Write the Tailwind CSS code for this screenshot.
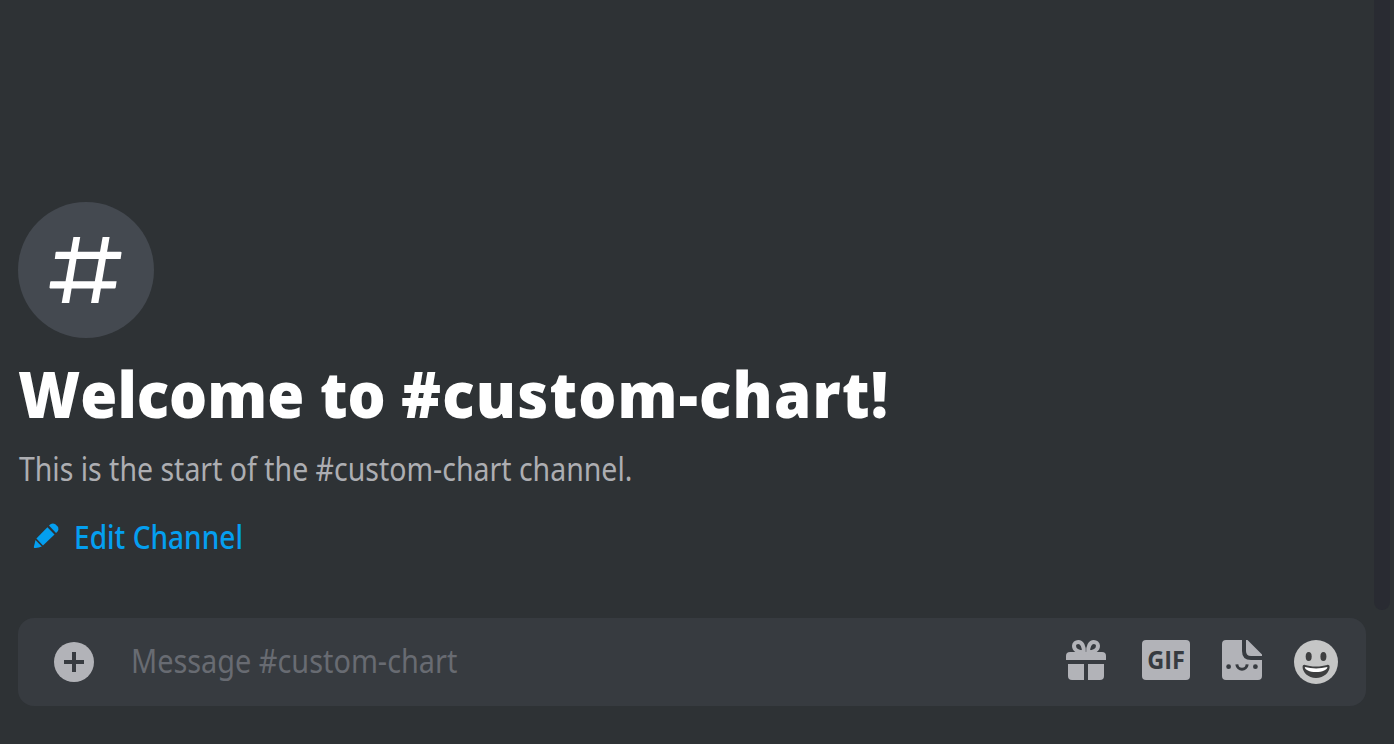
<!DOCTYPE html>
<html lang="en">
<head>
<meta charset="utf-8">
<title>#custom-chart</title>
<script src="https://cdn.jsdelivr.net/npm/@tailwindcss/browser@4"></script>
</head>
<body class="h-[744px] w-[1394px] overflow-hidden bg-[#2e3235] font-['Noto_Sans','Open_Sans',sans-serif]">
<div class="flex h-full flex-col">
  <div class="flex h-[610px] justify-between">
    <main class="flex flex-col items-start pl-[18px] pt-[202px]">
      <div class="size-[136px] rounded-full bg-[#444950]">
        <svg class="size-full" viewBox="18 202 136 136" fill="#fff">
          <path d="M73.4 237H80.2L69.2 303H61.7Z"/>
          <path d="M102.6 237H109.6L98.4 303H91Z"/>
          <path d="M56.4 251.7H120.5Q121.8 251.7 121.5 253L120.6 259H54.8L55.6 252.6Q55.7 251.7 56.4 251.7Z"/>
          <path d="M51 281.2H116.6L115.7 287.4Q115.5 288.4 114.6 288.4H50.3Q49.3 288.4 49.5 287.3L50.2 282Q50.3 281.2 51 281.2Z"/>
        </svg>
      </div>
      <h1 class="mt-[20px] h-[72px] origin-left scale-x-[0.937] whitespace-nowrap font-['Open_Sans'] text-[64px] font-extrabold leading-[72px] text-white">Welcome to <span class="tracking-[1.3px]">#custom-chart!</span></h1>
      <p class="mt-[17px] h-[44px] origin-left scale-x-[0.89] whitespace-nowrap pl-px text-[32px] leading-[44px] text-[#adaeb2]">This is the start of the #custom-chart channel.</p>
      <button class="mt-[24px] flex h-[44px] items-center pl-[15px] text-[#049ff0]">
        <svg class="-mt-0.5 h-[26px] w-[26px]" viewBox="0 0 26 26" fill="currentColor">
          <path d="M16 2.6Q18.8-.8 22.4 1.2Q26.2 4 25.2 7.2Q24.7 8.6 23 10Z"/>
          <path d="M14.4 4.2L21.5 11.5L10 22.4L3.4 15.6Z"/>
          <path d="M2.5 17L8.8 23.6Q5 25.3 1.3 24.9Q.7 24.7 .9 23.8Z"/>
        </svg>
        <span class="ml-[15px] origin-left scale-x-[0.877] whitespace-nowrap text-[32px] font-medium leading-[44px]">Edit Channel</span>
      </button>
    </main>
    <div class="mr-1 h-full w-4 rounded-b-lg bg-[#292b32]"></div>
  </div>
  <form class="ml-[18px] mt-2 flex h-[88px] w-[1348px] items-center rounded-2xl bg-[#373b40] pl-9 pr-7">
    <svg class="size-10 shrink-0" viewBox="0 0 40 40"><circle cx="20" cy="20" r="20" fill="#b2b3b8"/><path d="M18 10h4v8h8v4h-8v8h-4v-8h-8v-4h8z" fill="#373b40"/></svg>
    <span class="-mt-0.5 ml-[37px] origin-left scale-x-[0.902] whitespace-nowrap text-[32px] leading-[44px] text-[#686b72]">Message #custom-chart</span>
    <div class="ml-auto flex items-center">
      <svg class="-mt-1 h-10 w-10" viewBox="0 0 40 40" fill="#b2b3b8">
        <path d="M4 12H36Q40 12 40 16V20H0V16Q0 12 4 12Z"/>
        <path d="M2 24H18V40H6Q2 40 2 36Z"/>
        <path d="M22 24H38V36Q38 40 34 40H22Z"/>
        <path d="M17.8 12.2C12 12.2 8 10 8 5.8C8 3.5 10 2 12.2 2C16 2 18.2 6.5 17.8 12.2Z" fill="none" stroke="#b2b3b8" stroke-width="4"/>
        <path d="M22.2 12.2C28 12.2 32 10 32 5.8C32 3.5 30 2 27.8 2C24 2 21.8 6.5 22.2 12.2Z" fill="none" stroke="#b2b3b8" stroke-width="4"/>
      </svg>
      <div class="-mt-1 ml-9 flex h-10 w-12 items-center justify-center rounded-[4px] bg-[#b2b3b8] font-['Open_Sans'] text-[25px] font-bold leading-none text-[#373b40]"><span class="-mt-0.5 scale-x-[0.94]">GIF</span></div>
      <svg class="-mt-1 ml-8 h-10 w-10" viewBox="0 0 40 40" fill="#b2b3b8">
        <path d="M4 0H20V11Q20 20 29 20H40V36Q40 40 36 40H4Q0 40 0 36V4Q0 0 4 0Z"/>
        <path d="M24 0H25.5L40 14.5V16H29Q24 16 24 11Z"/>
        <g fill="#373b40"><circle cx="6.6" cy="26.7" r="2.4"/><circle cx="33.4" cy="26.7" r="2.4"/></g>
        <path d="M14.8 24.3C15.5 30.8 24.5 30.8 25.2 24.3" fill="none" stroke="#373b40" stroke-width="3"/>
      </svg>
      <svg class="ml-8 size-11" viewBox="0 0 44 44">
        <circle cx="22" cy="22" r="22" fill="#c5c6c6"/>
        <g fill="#3e3f40"><ellipse cx="14.7" cy="16.5" rx="3" ry="4.5"/><ellipse cx="29.4" cy="16.5" rx="3" ry="4.5"/>
        <path d="M22 26.5C17.5 26.5 14 25.7 11 24.9C9.6 24.6 8.6 25.4 8.6 27C8.6 32 14 38 22 38S35.6 32 35.6 27C35.6 25.4 34.6 24.6 33.2 24.9C30 25.7 26.5 26.5 22 26.5Z"/></g>
        <path d="M10.8 27Q22 29.8 33.4 27C33.4 29.7 28.5 32.1 22 32.1S10.8 29.7 10.8 27Z" fill="#fff"/>
      </svg>
    </div>
  </form>
</div>
</body>
</html>
